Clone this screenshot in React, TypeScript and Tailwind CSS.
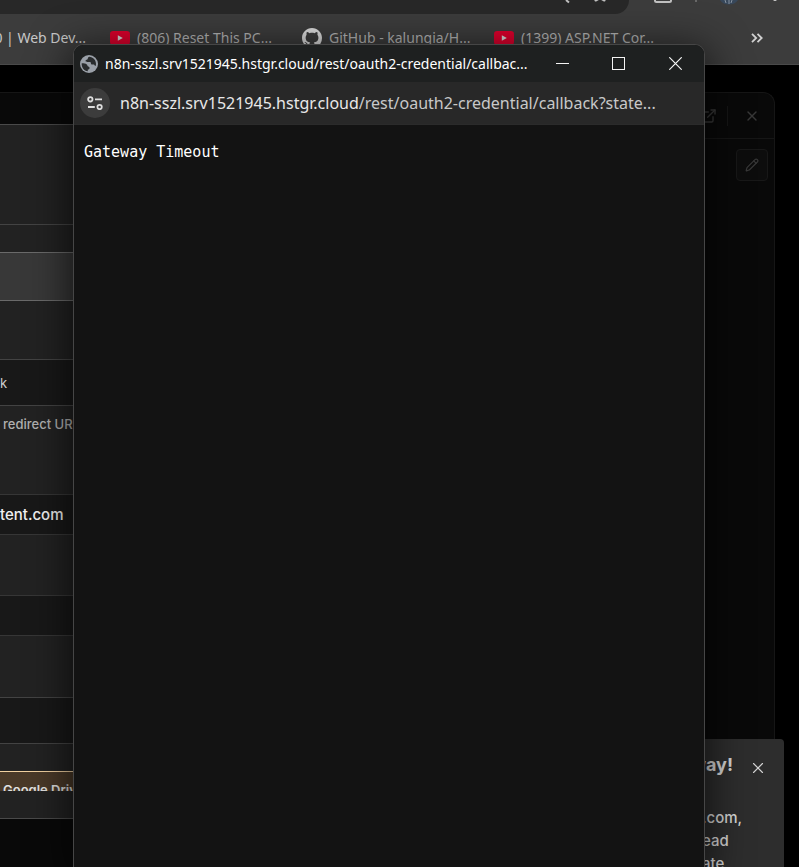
import type { ReactNode } from "react";
import { ExternalLink, Pencil, Star, X } from "lucide-react";

interface BookmarkProps {
  label: string;
  icon?: ReactNode;
}

interface FormBand {
  id: string;
  className: string;
  text?: string;
  textClassName?: string;
}

// Credential form visible to the left of the popup, top to bottom
const formBands: FormBand[] = [
  { id: "header", className: "h-[100px] border-t border-[#4a4a4a] bg-[#222222]" },
  { id: "tabs", className: "h-7 border-t border-[#434343] bg-[#222222]" },
  { id: "active", className: "h-12 border-t border-[#6a6a6a] bg-[#383838]" },
  { id: "spacer", className: "h-[59px] border-t border-[#6a6a6a] bg-[#222222]" },
  {
    id: "redirect",
    className: "h-[46px] border-t border-[#434343] bg-[#181818]",
    text: "k",
    textClassName: "text-[13px] leading-[46px] text-[#d0d0d0]",
  },
  {
    id: "hint",
    className: "h-[89px] border-t border-[#434343] bg-[#222222] pl-[3px] pt-2",
    text: "redirect URL",
    textClassName: "text-[13px] font-medium leading-5 text-[#b0b0b0]",
  },
  {
    id: "client-id",
    className: "h-10 border-t border-[#363636] bg-[#181818]",
    text: "tent.com",
    textClassName: "text-[15px] font-medium leading-[39px] text-[#f0f0f0]",
  },
  { id: "secret-label", className: "h-[61px] border-t border-[#363636] bg-[#222222]" },
  { id: "secret", className: "h-10 border-t border-[#363636] bg-[#181818]" },
  { id: "scope-label", className: "h-[62px] border-t border-[#363636] bg-[#222222]" },
  { id: "scope", className: "h-[46px] border-t border-[#434343] bg-[#181818]" },
  { id: "gap", className: "h-7 border-t border-[#434343] bg-[#222222]" },
  {
    id: "notice",
    className: "h-5 border-t border-[#f0d0a0] bg-[#493928] pl-[3px] pt-2",
    text: "Google Drive",
    textClassName: "text-[13px] font-semibold leading-5 text-[#e0e0e0]",
  },
  { id: "footer", className: "h-7 border-b border-[#4a4a4a] bg-[#222222]" },
];

function YouTubeIcon() {
  return (
    <svg viewBox="0 0 20 14" className="h-3.5 w-5 shrink-0" aria-hidden="true">
      <rect width="20" height="14" rx="3.2" fill="#e0002d" />
      <path d="M7.8 4.2v5.6L12.8 7z" fill="#d9d9d9" />
    </svg>
  );
}

function GitHubIcon() {
  return (
    <svg viewBox="0 0 16 16" className="h-5 w-5 shrink-0 fill-[#dcdcdc]" aria-hidden="true">
      <path d="M8 0C3.58 0 0 3.58 0 8c0 3.54 2.29 6.53 5.47 7.59.4.07.55-.17.55-.38 0-.19-.01-.82-.01-1.49-2.01.37-2.53-.49-2.69-.94-.09-.23-.48-.94-.82-1.13-.28-.15-.68-.52-.01-.53.63-.01 1.08.58 1.23.82.72 1.21 1.87.87 2.33.66.07-.52.28-.87.51-1.07-1.78-.2-3.64-.89-3.64-3.95 0-.87.31-1.59.82-2.15-.08-.2-.36-1.02.08-2.12 0 0 .67-.21 2.2.82.64-.18 1.32-.27 2-.27s1.36.09 2 .27c1.53-1.04 2.2-.82 2.2-.82.44 1.1.16 1.92.08 2.12.51.56.82 1.27.82 2.15 0 3.07-1.87 3.75-3.65 3.95.29.25.54.73.54 1.48 0 1.07-.01 1.93-.01 2.2 0 .21.15.46.55.38A8.01 8.01 0 0 0 16 8c0-4.42-3.58-8-8-8z" />
    </svg>
  );
}

function GlobeIcon() {
  return (
    <svg viewBox="0 0 18 18" className="h-[18px] w-[18px] shrink-0" aria-hidden="true">
      <circle cx="9" cy="9" r="9" fill="#9aa0a8" />
      <path
        d="M9.6 1.7C8.2 2 7.7 2.6 7.8 3.5c.1.8-.3 1.1-1.2 1.2-.9.1-1.1.6-1 1.400.1.8.8.9 1.8.9h2.200c.9 0 1.3.4 1.3 1.2 0 .9.5 1.2 1.4 1.2h1.1c.8 0 1.1.4 1.3 1.2l1 .5c1.3-3.900-1-8.600-6.100-9.400z"
        fill="#292c2e"
      />
      <path
        d="M1.700 8.300c2.100 0 4 .2 5.100 1.200.8.7.6 1.7 1.5 2 .9.2 1.300.7 1.200 1.700 0 1-.7 1.300-1.700 1.300v1.700C4 16 1.400 12.500 1.700 8.300z"
        fill="#292c2e"
      />
    </svg>
  );
}

function TuneIcon() {
  return (
    <svg viewBox="0 0 16 14" className="h-3.5 w-4" fill="none" stroke="#dedede" strokeWidth="1.8" aria-hidden="true">
      <circle cx="3.3" cy="3.3" r="2.2" />
      <path d="M8 3.3h7M1 11h6.8" />
      <circle cx="12.6" cy="11" r="2.2" />
    </svg>
  );
}

function Bookmark({ label, icon }: BookmarkProps) {
  return (
    <a
      href="#"
      className={`flex shrink-0 items-center gap-[7px] whitespace-nowrap ${
        icon ? "w-[168px] text-[#b4b4b4]" : "w-[86px] justify-end text-[#c8c8c8]"
      }`}
    >
      {icon}
      {label}
    </a>
  );
}

function BrowserChrome() {
  return (
    <header className="h-[65px] border-b border-[#4a4a4a] bg-[#3c3c3c]">
      <div className="flex h-3.5 items-start">
        <div className="flex h-3.5 w-[629px] shrink-0 items-start justify-end gap-5 overflow-hidden rounded-br-[20px] bg-[#282828] pr-5 text-[#c0c0c0]">
          <svg viewBox="0 0 16 4" className="h-1 w-4" aria-hidden="true">
            <path d="M11 0l3 2.5" stroke="currentColor" strokeWidth="2" />
          </svg>
          <Star className="-mt-[15px] h-[18px] w-[18px]" strokeWidth={2} />
        </div>
        <svg viewBox="0 0 144 6" className="ml-3 h-1.5 w-36 shrink-0" fill="none" aria-hidden="true">
          <path d="M14 0v.5q0 1.5 1.5 1.5h13q1.5 0 1.5-1.5V0" stroke="#c0c0c0" strokeWidth="2" />
          <path d="M55 0v2" stroke="#686868" strokeWidth="2" />
          <path d="M79 0c2 3 5 4.5 9 4.5S95 3 97 0z" fill="#37475a" />
          <path d="M84 0l1 3M88 0v4M91 0l-1 3" stroke="#8793a0" strokeWidth="1" />
          <circle cx="134" cy="-1" r="2" fill="#d0d0d0" />
        </svg>
      </div>
      <nav className="flex h-12 items-center gap-6 overflow-hidden font-['Noto_Sans','Open_Sans',sans-serif] text-sm">
        <Bookmark label="0 | Web Dev..." />
        <Bookmark label="(806) Reset This PC..." icon={<YouTubeIcon />} />
        <Bookmark label="GitHub - kalungia/H..." icon={<GitHubIcon />} />
        <Bookmark label="(1399) ASP.NET Cor..." icon={<YouTubeIcon />} />
        <button type="button" aria-label="More bookmarks" className="ml-auto mr-9 shrink-0 text-[#d0d0d0]">
          <svg viewBox="0 0 12 10" className="h-2.5 w-3" fill="none" stroke="currentColor" strokeWidth="1.8" aria-hidden="true">
            <path d="M1 .8L5.200 5 1 9.200M6.500 .8L10.700 5 6.500 9.200" />
          </svg>
        </button>
      </nav>
    </header>
  );
}

function PopupWindow() {
  return (
    <section className="absolute bottom-0 left-[73px] right-[94px] top-11 flex flex-col overflow-hidden rounded-t-[10px] border border-b-0 border-[#464646] bg-[#131313] shadow-[0_8px_40px_4px_rgba(0,0,0,0.65)]">
      <div className="flex h-[37px] shrink-0 items-center bg-[#1e2020] pl-1.5">
        <GlobeIcon />
        <h1 className="ml-[7px] min-w-0 flex-1 overflow-hidden whitespace-nowrap font-['Noto_Sans','Open_Sans',sans-serif] text-sm text-white">
          n8n-sszl.srv1521945.hstgr.cloud/rest/oauth2-credential/callbac...
        </h1>
        <div className="flex shrink-0 text-[#f4f4f4]">
          <button type="button" aria-label="Minimize" className="flex h-9 w-14 items-center justify-center">
            <svg viewBox="0 0 13 13" className="h-[13px] w-[13px]" stroke="currentColor" aria-hidden="true">
              <path d="M0 6.5h13" />
            </svg>
          </button>
          <button type="button" aria-label="Maximize" className="flex h-9 w-14 items-center justify-center">
            <svg viewBox="0 0 13 13" className="h-[13px] w-[13px]" fill="none" stroke="currentColor" aria-hidden="true">
              <rect x=".5" y=".5" width="12" height="12" />
            </svg>
          </button>
          <button type="button" aria-label="Close window" className="flex h-9 w-[58px] items-center justify-center">
            <svg viewBox="0 0 13 13" className="h-[13px] w-[13px]" stroke="currentColor" strokeWidth="1.2" aria-hidden="true">
              <path d="M.3 .3l12.400 12.400M12.700 .3L.3 12.700" />
            </svg>
          </button>
        </div>
      </div>
      <div className="flex h-[43px] shrink-0 items-center gap-2.5 border-b border-[#2b2b2b] bg-[#282828] pl-1.5">
        <button
          type="button"
          aria-label="View site information"
          className="flex h-[30px] w-[30px] shrink-0 items-center justify-center rounded-full bg-[#3c3c3c]"
        >
          <TuneIcon />
        </button>
        <p className="overflow-hidden whitespace-nowrap font-['Noto_Sans','Open_Sans',sans-serif] text-base text-[#c8c8c8]">
          <span className="text-[#e8e8e8]">n8n-sszl.srv1521945.hstgr.cloud</span>
          /rest/oauth2-credential/callback?state...
        </p>
      </div>
      <pre className="px-2.5 pt-[17px] font-['DejaVu_Sans_Mono',monospace] text-[15px] leading-5 text-white">
        Gateway Timeout
      </pre>
    </section>
  );
}

function Toast() {
  return (
    <aside className="absolute bottom-0 right-[15px] top-[739px] w-80 overflow-hidden rounded-t bg-[#2d2d2d] text-[#d4d4d4]">
      <div className="flex items-center justify-end gap-4 pr-[17px] pt-3">
        <h2 className="text-lg font-bold leading-7">away!</h2>
        <button type="button" aria-label="Dismiss" className="mt-1.5">
          <X className="h-[18px] w-[18px]" strokeWidth={1.5} />
        </button>
      </div>
      <div className="ml-auto w-[82px] pt-[27px] text-[15px] font-medium leading-[23px]">
        <p>.com,</p>
        <p>ead</p>
        <p>ate</p>
      </div>
    </aside>
  );
}

export default function App() {
  return (
    <div className="relative flex h-screen flex-col overflow-hidden bg-black font-['Inter',sans-serif]">
      <BrowserChrome />
      <main className="flex min-h-0 flex-1 pt-[27px]">
        <div className="mr-6 flex flex-1 justify-between rounded-tr-xl border-r border-t border-[#161616] bg-[#090909]">
          <div className="w-24 pt-[31px]">
            {formBands.map((band) => (
              <div key={band.id} className={`overflow-hidden whitespace-nowrap ${band.className}`}>
                {band.text && <p className={band.textClassName}>{band.text}</p>}
              </div>
            ))}
          </div>
          <div className="w-24 text-[#383838]">
            <div className="flex h-[46px] items-center justify-end gap-2.5 border-b border-[#161616] pr-3.5">
              <ExternalLink className="h-4 w-4" strokeWidth={2} />
              <span className="h-5 w-px bg-[#161616]" />
              <button type="button" aria-label="Close panel" className="ml-1.5">
                <X className="h-4 w-4" strokeWidth={2} />
              </button>
            </div>
            <button
              type="button"
              aria-label="Edit output"
              className="ml-auto mr-1.5 mt-2.5 flex h-8 w-8 items-center justify-center rounded border border-[#181818] bg-[#0d0d0d]"
            >
              <Pencil className="h-3.5 w-3.5" strokeWidth={2} />
            </button>
          </div>
        </div>
      </main>
      <Toast />
      <PopupWindow />
    </div>
  );
}
